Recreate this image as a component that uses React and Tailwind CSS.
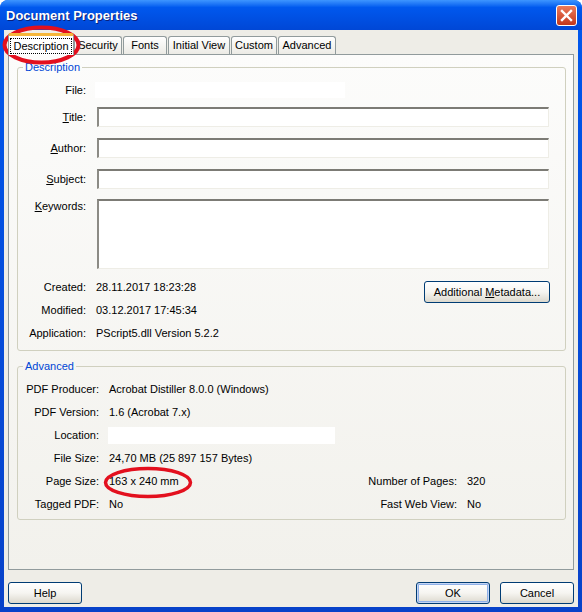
import React from 'react';

// XP style sunken text field
function Field({ className }) {
  return (
    <div
      className={`bg-white border-t-2 border-l-2 border-b border-r border-t-[#7c7b75] border-l-[#8c8b85] border-b-[#eeede6] border-r-[#eeede6] ${className}`}
    />
  );
}

function XpButton({ children, className = '', isDefault = false }) {
  return (
    <div
      className={`h-[22px] flex items-center justify-center rounded-[3px] border border-[#003c74] bg-linear-to-b from-white via-[#f6f5f1] to-[#dcd8cd] ${
        isDefault ? 'shadow-[inset_0_0_0_1px_#c5d6f4,inset_0_0_0_2px_#8fb0e8]' : ''
      } ${className}`}
    >
      <span>{children}</span>
    </div>
  );
}

function Tab({ label, className }) {
  return (
    <div
      className={`h-[18px] flex items-center justify-center rounded-t-[3px] border border-b-0 border-[#919b9c] bg-linear-to-b from-white to-[#ecebe5] ${className}`}
    >
      {label}
    </div>
  );
}

function Label({ children, className = '' }) {
  return <div className={`text-right shrink-0 ${className}`}>{children}</div>;
}

export default function App() {
  return (
    <div className="relative w-[582px] h-[612px] bg-white font-['Liberation_Sans',Arial,sans-serif] text-[11px] leading-[13px] text-black">
      <div className="h-full flex flex-col rounded-t-[8px] bg-linear-to-b from-[#0058ee] to-[#0842c9] overflow-hidden">
        {/* Title bar */}
        <div className="h-[30px] shrink-0 flex items-center justify-between pl-[6px] pr-[5px] bg-linear-to-b from-[#3d95ff] from-0% via-[#0058ee] via-25% to-[#0047d6] to-100%">
          <div className="text-white font-bold text-[13px] leading-[16px] pt-[1px] [text-shadow:1px_1px_0_#0a1f7a]">
            Document Properties
          </div>
          <div className="w-[21px] h-[21px] rounded-[3px] border border-white bg-linear-to-b from-[#ec7a5a] to-[#c3361a] flex items-center justify-center">
            <svg width="13" height="13" viewBox="0 0 13 13">
              <path d="M2 2 L11 11 M11 2 L2 11" stroke="white" strokeWidth="2.4" strokeLinecap="square" />
            </svg>
          </div>
        </div>

        {/* Dialog body */}
        <div className="flex-1 mx-[4px] mb-[5px] bg-[#eeede7] px-[4px] pt-[3px] flex flex-col">
          {/* Tabs */}
          <div className="h-[21px] flex items-end">
            <div className="relative z-10 w-[66px] h-[22px] -mb-[1px] flex items-center justify-center rounded-t-[3px] border border-b-0 border-[#919b9c] border-t-[3px] border-t-[#f6b63a] bg-white">
              <span className="outline outline-1 outline-dotted outline-black px-[2px] leading-[14px]">Description</span>
            </div>
            <Tab label="Security" className="w-[48px]" />
            <Tab label="Fonts" className="w-[44px] ml-[1px]" />
            <Tab label="Initial View" className="w-[62px] ml-[1px]" />
            <Tab label="Custom" className="w-[46px] ml-[1px]" />
            <Tab label="Advanced" className="w-[58px] ml-[1px]" />
          </div>

          {/* Tab page */}
          <div className="w-[566px] h-[516px] border border-[#919b9c] bg-linear-to-b from-[#fcfcfb] to-[#f2f1ec] px-[8px] pt-[6px]">
            <fieldset className="w-[549px] border border-[#d0d0bf] rounded-[3px] pb-[5px]">
              <legend className="ml-[5px] px-[2px] text-[#0046d5]">Description</legend>

              <div className="flex items-center h-[16px] mt-[8px]">
                <Label className="w-[68px]">File:</Label>
                <div className="ml-[9px] w-[250px] h-[16px] bg-white" />
              </div>
              <div className="flex items-center h-[20px] mt-[9px]">
                <Label className="w-[68px]"><span className="underline">T</span>itle:</Label>
                <Field className="ml-[11px] w-[452px] h-[20px]" />
              </div>
              <div className="flex items-center h-[20px] mt-[11px]">
                <Label className="w-[68px]"><span className="underline">A</span>uthor:</Label>
                <Field className="ml-[11px] w-[452px] h-[20px]" />
              </div>
              <div className="flex items-center h-[20px] mt-[11px]">
                <Label className="w-[68px]"><span className="underline">S</span>ubject:</Label>
                <Field className="ml-[11px] w-[452px] h-[20px]" />
              </div>
              <div className="flex items-start h-[70px] mt-[10px]">
                <Label className="w-[68px] pt-[1px]"><span className="underline">K</span>eywords:</Label>
                <Field className="ml-[11px] w-[452px] h-[70px]" />
              </div>

              <div className="flex items-start mt-[7px]">
                <div className="flex flex-col">
                  <div className="flex items-center h-[23px]">
                    <Label className="w-[68px]">Created:</Label>
                    <div className="ml-[10px]">28.11.2017 18:23:28</div>
                  </div>
                  <div className="flex items-center h-[23px]">
                    <Label className="w-[68px]">Modified:</Label>
                    <div className="ml-[10px]">03.12.2017 17:45:34</div>
                  </div>
                  <div className="flex items-center h-[23px]">
                    <Label className="w-[68px]">Application:</Label>
                    <div className="ml-[10px]">PScript5.dll Version 5.2.2</div>
                  </div>
                </div>
                <XpButton className="ml-auto mr-[15px] mt-[5px] w-[126px]">
                  Additional <span className="underline">M</span>etadata...
                </XpButton>
              </div>
            </fieldset>

            <fieldset className="w-[549px] mt-[9px] border border-[#d0d0bf] rounded-[3px] pt-[5px] pb-[3px]">
              <legend className="ml-[5px] px-[2px] text-[#0046d5]">Advanced</legend>

              <div className="flex items-center h-[23px]">
                <Label className="w-[81px]">PDF Producer:</Label>
                <div className="ml-[10px]">Acrobat Distiller 8.0.0 (Windows)</div>
              </div>
              <div className="flex items-center h-[23px]">
                <Label className="w-[81px]">PDF Version:</Label>
                <div className="ml-[10px]">1.6 (Acrobat 7.x)</div>
              </div>
              <div className="flex items-center h-[23px]">
                <Label className="w-[81px]">Location:</Label>
                <div className="ml-[9px] w-[227px] h-[17px] bg-white" />
              </div>
              <div className="flex items-center h-[23px]">
                <Label className="w-[81px]">File Size:</Label>
                <div className="ml-[10px]">24,70 MB (25 897 157 Bytes)</div>
              </div>
              <div className="flex items-center h-[23px]">
                <Label className="w-[81px]">Page Size:</Label>
                <div className="ml-[10px]">163 x 240 mm</div>
                <div className="ml-auto flex">
                  <Label className="w-[120px]">Number of Pages:</Label>
                  <div className="w-[108px] pl-[10px]">320</div>
                </div>
              </div>
              <div className="flex items-center h-[23px]">
                <Label className="w-[81px]">Tagged PDF:</Label>
                <div className="ml-[10px]">No</div>
                <div className="ml-auto flex">
                  <Label className="w-[120px]">Fast Web View:</Label>
                  <div className="w-[108px] pl-[10px]">No</div>
                </div>
              </div>
            </fieldset>
          </div>

          {/* Bottom buttons */}
          <div className="w-[566px] flex mt-[12px]">
            <XpButton className="w-[74px]">Help</XpButton>
            <XpButton className="w-[74px] ml-auto" isDefault>OK</XpButton>
            <XpButton className="w-[74px] ml-[10px]">Cancel</XpButton>
          </div>
        </div>
      </div>

      {/* Red annotation circles drawn over the screenshot */}
      <svg className="absolute left-0 top-0 pointer-events-none" width="582" height="612">
        <ellipse cx="41.5" cy="45" rx="37" ry="17.5" fill="none" stroke="#e3101e" strokeWidth="4" />
        <ellipse cx="148" cy="482.5" rx="42.5" ry="14" fill="none" stroke="#e3101e" strokeWidth="3.5" />
      </svg>
    </div>
  );
}
